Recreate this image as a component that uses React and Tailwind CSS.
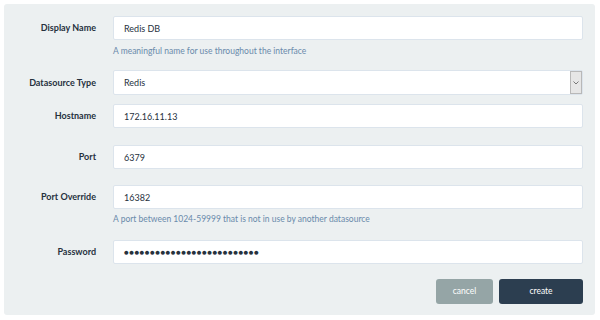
import React from 'react';

const font = { fontFamily: 'Lato, "Open Sans", sans-serif' };

const Row = ({ label, className = '', children }) => (
  <div className={`flex items-center ${className}`}>
    <label className="w-[96px] shrink-0 pr-[4px] text-right text-[9px] font-bold text-[#26313d]">{label}</label>
    <div className="ml-[13px] flex-1">{children}</div>
  </div>
);

const Field = ({ value }) => (
  <input
    type="text"
    readOnly
    value={value}
    className="block h-[24px] w-full rounded-[2px] border border-[#dce4ec] bg-white pl-[10px] text-[9px] text-[#26313d] outline-none"
  />
);

const Hint = ({ children, className = '' }) => (
  <div className={`ml-[109px] text-[8.5px] leading-[14px] text-[#6a8aab] ${className}`}>{children}</div>
);

const App = () => {
  return (
    <div className="h-[320px] w-[600px] bg-white p-[4px]" style={font}>
      <div className="h-[311px] w-[591px] rounded-[3px] bg-[#ecf0f1] pt-[12px] pr-[12px]">
        <Row label="Display Name">
          <Field value="Redis DB" />
        </Row>
        <Hint className="mt-[4px]">A meaningful name for use throughout the interface</Hint>

        <Row label="Datasource Type" className="mt-[12px]">
          <div className="flex h-[25px] w-full rounded-[2px] border border-[#dce4ec] bg-white">
            <span className="flex flex-1 items-center pl-[10px] text-[9px] text-[#26313d]">Redis</span>
            <span className="flex w-[12px] items-center justify-center border border-[#b8b8b8] bg-[#e6e6e6]">
              <svg width="6" height="4" viewBox="0 0 6 4">
                <path d="M0.5 0.5 L3 3 L5.5 0.5" fill="none" stroke="#777" strokeWidth="1" />
              </svg>
            </span>
          </div>
        </Row>

        <Row label="Hostname" className="mt-[9px]">
          <Field value="172.16.11.13" />
        </Row>

        <Row label="Port" className="mt-[17px]">
          <Field value="6379" />
        </Row>

        <Row label="Port Override" className="mt-[16px]">
          <Field value="16382" />
        </Row>
        <Hint className="mt-[3px]">A port between 1024-59999 that is not in use by another datasource</Hint>

        <Row label="Password" className="mt-[14px]">
          <div className="flex h-[24px] w-full items-center rounded-[2px] border border-[#dce4ec] bg-white pl-[10px] text-[8px] tracking-[0.4px] text-[#26313d]">
            {'●'.repeat(26)}
          </div>
        </Row>

        <div className="mt-[15px] flex justify-end gap-[6px]">
          <button className="h-[25px] w-[57px] rounded-[3px] bg-[#95a5a6] text-[8.5px] text-white">cancel</button>
          <button className="h-[25px] w-[84px] rounded-[3px] bg-[#2c3e50] text-[8.5px] text-white">create</button>
        </div>
      </div>
    </div>
  );
};

export default App;
